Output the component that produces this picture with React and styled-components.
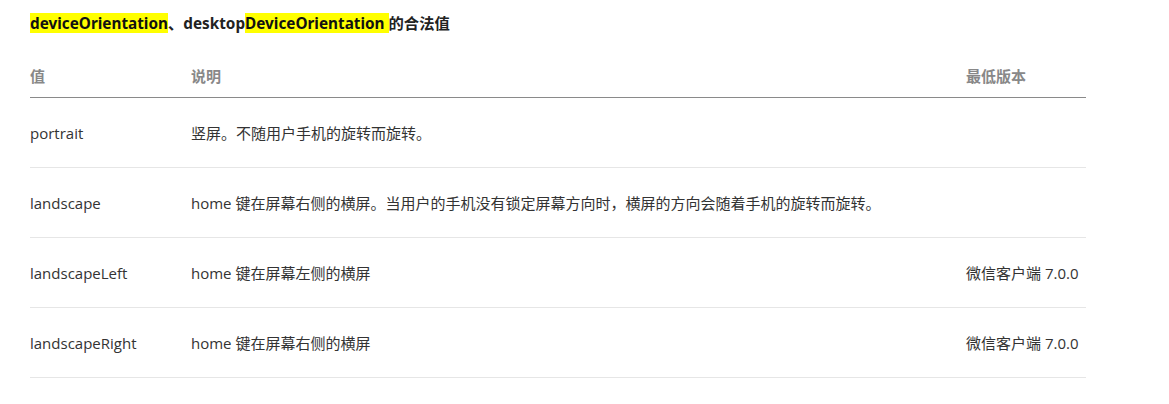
import styled, { createGlobalStyle } from 'styled-components';

const GlobalStyle = createGlobalStyle`
  body {
    margin: 0;
    background: #fff;
    font-family: "Noto Sans", "Noto Sans CJK SC", sans-serif;
    color: #333;
  }
`;

const Page = styled.div`
  padding: 11px 83px 0 30px;
`;

const Title = styled.h4`
  margin: 0;
  font-size: 15.3px;
  line-height: 24px;
  font-weight: 700;
  color: #222;
`;

const Mark = styled.mark`
  background: #ffff00;
  color: #111;
`;

const Table = styled.table`
  width: 1056px;
  margin-top: 18px;
  border-collapse: collapse;
  font-family: "Open Sans", "Noto Sans CJK SC", sans-serif;
  font-size: 15px;
  table-layout: fixed;
`;

const HeadCell = styled.th`
  width: ${(p) => p.$w}px;
  height: 44px;
  padding: 0;
  text-align: left;
  font-weight: 700;
  color: #888;
  border-bottom: 1px solid #8a8a8a;
  vertical-align: middle;
`;

const Row = styled.tr`
  border-bottom: 1px solid #e6e6e6;
`;

const Cell = styled.td`
  height: 69px;
  padding: 0;
  vertical-align: middle;
  color: #333;
  white-space: nowrap;
`;

const rows = [
  { value: 'portrait', desc: '竖屏。不随用户手机的旋转而旋转。', ver: '' },
  {
    value: 'landscape',
    desc: 'home 键在屏幕右侧的横屏。当用户的手机没有锁定屏幕方向时，横屏的方向会随着手机的旋转而旋转。',
    ver: '',
  },
  { value: 'landscapeLeft', desc: 'home 键在屏幕左侧的横屏', ver: '微信客户端 7.0.0' },
  { value: 'landscapeRight', desc: 'home 键在屏幕右侧的横屏', ver: '微信客户端 7.0.0' },
];

export default function App() {
  return (
    <>
      <GlobalStyle />
      <Page>
        <Title>
          <Mark>deviceOrientation</Mark>、desktop<Mark>DeviceOrientation </Mark>的合法值
        </Title>
        <Table>
          <thead>
            <tr>
              <HeadCell $w={161}>值</HeadCell>
              <HeadCell $w={775}>说明</HeadCell>
              <HeadCell $w={120}>最低版本</HeadCell>
            </tr>
          </thead>
          <tbody>
            {rows.map((r) => (
              <Row key={r.value}>
                <Cell>{r.value}</Cell>
                <Cell>{r.desc}</Cell>
                <Cell>{r.ver}</Cell>
              </Row>
            ))}
          </tbody>
        </Table>
      </Page>
    </>
  );
}
